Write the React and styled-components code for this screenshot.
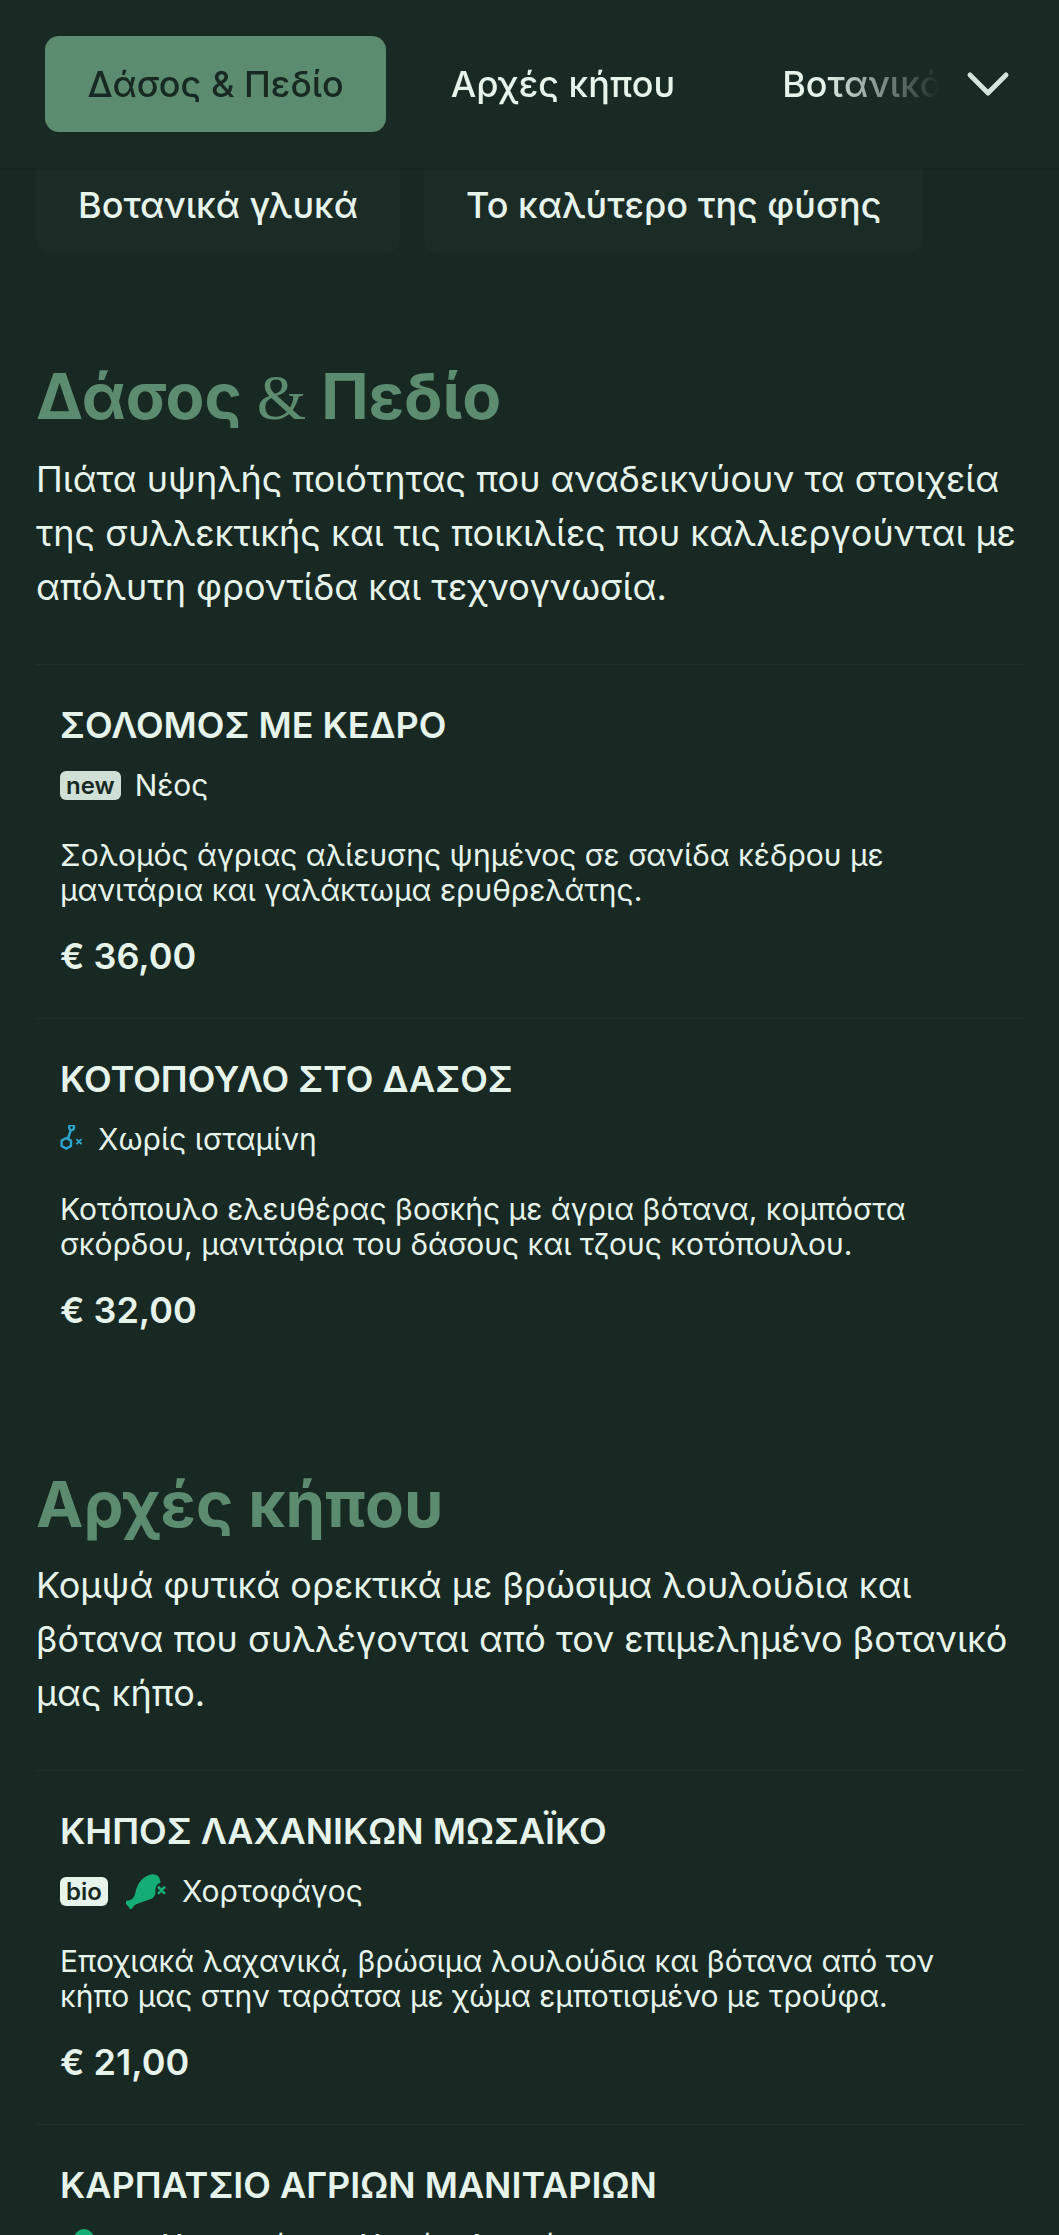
import React from 'react';
import styled, { createGlobalStyle } from 'styled-components';

const Global = createGlobalStyle`
  html, body { margin: 0; padding: 0; background: #182822; }
  * { box-sizing: border-box; }
`;

const Page = styled.div`
  position: relative;
  width: 1059px;
  height: 2235px;
  overflow: hidden;
  background: #182822;
  color: #e6f4ec;
  font-family: Inter, "Noto Sans", sans-serif;
`;

const Header = styled.header`
  position: absolute;
  top: 0;
  left: 0;
  right: 0;
  height: 168px;
  display: flex;
  align-items: center;
  padding: 0 49px 0 45px;
  background: #192923;
  box-shadow: 0 1px 2px rgba(0, 0, 0, 0.12);
  z-index: 2;
`;

const TabStrip = styled.nav`
  flex: 1;
  min-width: 0;
  display: flex;
  gap: 22px;
  overflow: hidden;
  -webkit-mask-image: linear-gradient(to right, #000 87%, transparent 100%);
  mask-image: linear-gradient(to right, #000 87%, transparent 100%);
`;

const Tab = styled.div`
  flex: none;
  height: 96px;
  display: flex;
  align-items: center;
  padding: 0 42.5px;
  border-radius: 14px;
  font-size: 36px;
  font-weight: 500;
  background: ${p => (p.$active ? '#5c8c70' : 'transparent')};
  color: ${p => (p.$active ? '#182822' : '#e6f4ec')};
`;

const Chevron = styled.svg`
  flex: none;
  width: 44px;
  height: 28px;
  margin-left: 26px;
`;

const Main = styled.main`
  padding: 156px 36px 0;
`;

const ChipRow = styled.div`
  display: flex;
  gap: 24px;
  margin-bottom: 104px;
`;

const Chip = styled.div`
  height: 97px;
  display: flex;
  align-items: center;
  padding: 0 42px;
  border-radius: 14px;
  background: #1b2b25;
  font-size: 36px;
  font-weight: 500;
`;

const Section = styled.section`
  margin-bottom: 93px;
`;

const Heading = styled.h2`
  margin: 0 0 15px;
  font-size: 63.5px;
  line-height: 78px;
  font-weight: 700;
  color: #5c8c70;
`;

const Amp = styled.span`
  font-family: "Liberation Serif", serif;
  font-weight: 400;
`;

const Intro = styled.p`
  margin: 0 0 50px;
  font-size: 36px;
  line-height: 54px;
  font-weight: 400;
  color: #e6f4ec;
`;

const Item = styled.article`
  padding: 38px 24px 40px;
  border-top: 1.5px solid #1f3029;
`;

const ItemName = styled.h3`
  margin: 0 0 16px;
  font-size: 36px;
  line-height: 44px;
  font-weight: 600;
`;

const TagRow = styled.div`
  display: flex;
  align-items: center;
  gap: 14px;
  height: 44px;
  margin-bottom: 31px;
  font-size: 30px;
  font-weight: 400;
`;

const Badge = styled.span`
  display: inline-flex;
  align-items: center;
  justify-content: center;
  height: 29px;
  padding: 0 6px;
  border-radius: 6px;
  background: ${p => (p.$bright ? '#e6f4ec' : '#d0e0d6')};
  color: #182822;
  font-size: 24px;
  font-weight: 600;
  margin-right: ${p => (p.$bright ? '4px' : '0')};
`;

const Description = styled.p`
  margin: 0 0 26px;
  font-size: 30px;
  line-height: 35px;
  font-weight: 400;
`;

const Price = styled.div`
  font-size: 36px;
  line-height: 44px;
  font-weight: 600;
`;

const HistamineIcon = () => (
  <svg width="24" height="29" viewBox="6 6 24 29" fill="none" stroke="#2fa6cf" strokeWidth="2.4" strokeLinecap="round" strokeLinejoin="round">
    <path d="M12.3 19 L17 21.6 L17 27 L12.3 29.6 L7.6 27 L7.6 21.6 Z" />
    <path d="M14 19.5 L16 13.5 L17 11.2" />
    <circle cx="17.6" cy="8.6" r="2.5" />
    <path d="M23 20.7 L27 24.7 M27 20.7 L23 24.7" strokeWidth="1.9" />
  </svg>
);

const DrumstickIcon = () => (
  <svg width="42" height="37" viewBox="6 5 42 37">
    <path fill="#14ad74" d="M7.5 32.5 C9 32.5 11 32 12.5 30.5 C14 29 15 27 15.5 24 C17 17 22 8 31 6.5 C36.5 5.5 40.5 9 40.5 15 C37 15.5 35 19.5 35.5 24 C35.5 26.5 34 29.5 32 30.5 C28 32.5 22.5 33.5 18 35.5 C15.5 36.5 14 37.5 13 39 C12.5 41.5 9.5 41.8 9 39.5 C8.5 38 6.5 37.5 6 35.5 C5.7 33.8 6.5 32.5 7.5 32.5 Z" />
    <path d="M38.8 19.5 L44.2 25 M44.2 19.5 L38.8 25" stroke="#14ad74" strokeWidth="2.6" strokeLinecap="round" />
  </svg>
);

const DietIcons = () => (
  <svg width="88" height="34" viewBox="0 0 88 34">
    <circle cx="24" cy="11" r="10" fill="#14ad74" />
  </svg>
);

const sections = [
  {
    title: <>Δάσος <Amp>&amp;</Amp> Πεδίο</>,
    intro: 'Πιάτα υψηλής ποιότητας που αναδεικνύουν τα στοιχεία της συλλεκτικής και τις ποικιλίες που καλλιεργούνται με απόλυτη φροντίδα και τεχνογνωσία.',
    items: [
      {
        name: 'ΣΟΛΟΜΟΣ ΜΕ ΚΕΔΡΟ',
        tag: <><Badge>new</Badge>Νέος</>,
        desc: <>Σολομός άγριας αλίευσης ψημένος σε σανίδα κέδρου με<br />μανιτάρια και γαλάκτωμα ερυθρελάτης.</>,
        price: '€ 36,00',
      },
      {
        name: 'ΚΟΤΟΠΟΥΛΟ ΣΤΟ ΔΑΣΟΣ',
        tag: <><HistamineIcon />Χωρίς ισταμίνη</>,
        desc: <>Κοτόπουλο ελευθέρας βοσκής με άγρια βότανα, κομπόστα<br />σκόρδου, μανιτάρια του δάσους και τζους κοτόπουλου.</>,
        price: '€ 32,00',
      },
    ],
  },
  {
    title: 'Αρχές κήπου',
    intro: 'Κομψά φυτικά ορεκτικά με βρώσιμα λουλούδια και βότανα που συλλέγονται από τον επιμελημένο βοτανικό μας κήπο.',
    items: [
      {
        name: 'ΚΗΠΟΣ ΛΑΧΑΝΙΚΩΝ ΜΩΣΑΪΚΟ',
        tag: <><Badge $bright>bio</Badge><DrumstickIcon />Χορτοφάγος</>,
        desc: <>Εποχιακά λαχανικά, βρώσιμα λουλούδια και βότανα από τον<br />κήπο μας στην ταράτσα με χώμα εμποτισμένο με τρούφα.</>,
        price: '€ 21,00',
      },
      {
        name: 'ΚΑΡΠΑΤΣΙΟ ΑΓΡΙΩΝ ΜΑΝΙΤΑΡΙΩΝ',
        tag: <><DietIcons />Χορτοφάγος, Χωρίς γλουτένη</>,
        desc: '',
        price: '',
      },
    ],
  },
];

export default function App() {
  return (
    <Page>
      <Global />
      <Header>
        <TabStrip>
          <Tab $active>Δάσος &amp; Πεδίο</Tab>
          <Tab>Αρχές κήπου</Tab>
          <Tab>Βοτανικά γλυκά</Tab>
        </TabStrip>
        <Chevron viewBox="0 0 44 28" fill="none" stroke="#d4e4da" strokeWidth="5" strokeLinecap="round" strokeLinejoin="round">
          <path d="M4 5 L22 23 L40 5" />
        </Chevron>
      </Header>
      <Main>
        <ChipRow>
          <Chip>Βοτανικά γλυκά</Chip>
          <Chip>Το καλύτερο της φύσης</Chip>
        </ChipRow>
        {sections.map((s, i) => (
          <Section key={i}>
            <Heading>{s.title}</Heading>
            <Intro>{s.intro}</Intro>
            {s.items.map(it => (
              <Item key={it.name}>
                <ItemName>{it.name}</ItemName>
                <TagRow>{it.tag}</TagRow>
                {it.desc && <Description>{it.desc}</Description>}
                {it.price && <Price>{it.price}</Price>}
              </Item>
            ))}
          </Section>
        ))}
      </Main>
    </Page>
  );
}
